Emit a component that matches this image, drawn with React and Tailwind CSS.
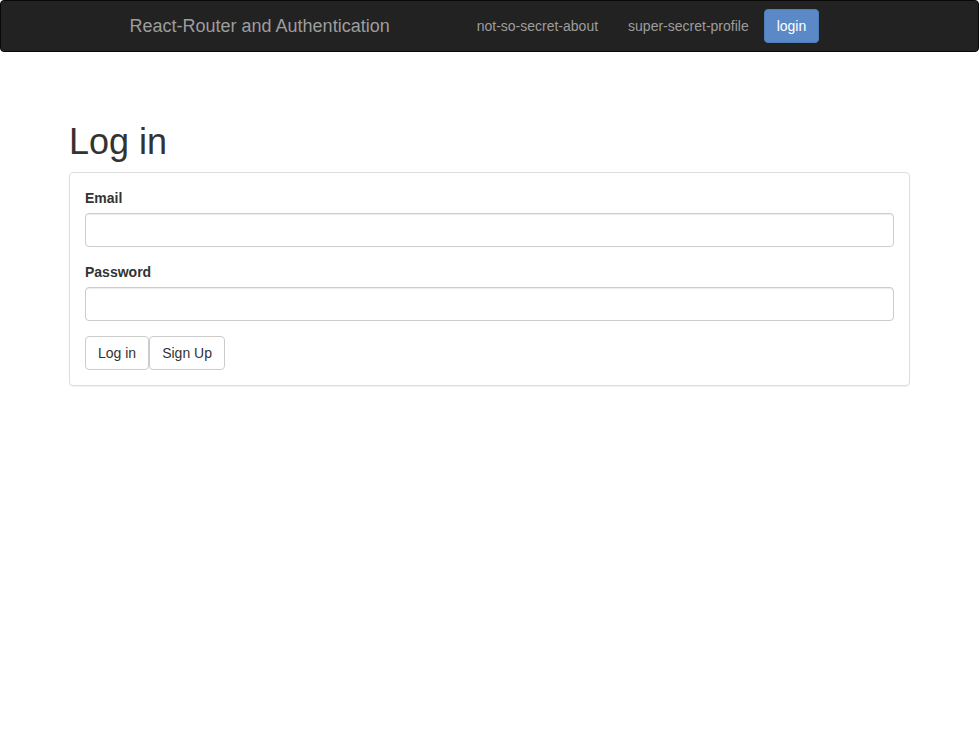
import React from "react";

export default function App() {
  return (
    <div className="min-h-screen bg-white text-[14px] leading-[20px] text-[#333]" style={{ fontFamily: '"Liberation Sans", Arial, sans-serif' }}>
      {/* Navbar */}
      <nav className="h-[52px] bg-[#222] border border-[#080808] rounded-[4px]">
        <div className="w-[750px] mx-auto flex items-center h-[50px]">
          <a className="px-[15px] text-[18px] leading-[20px] text-[#9d9d9d] py-[15px]" href="#">
            React-Router and Authentication
          </a>
          <ul className="flex items-center ml-[57px]">
            <li>
              <a className="block px-[15px] py-[15px] text-[#9d9d9d]" href="#">not-so-secret-about</a>
            </li>
            <li>
              <a className="block px-[15px] py-[15px] text-[#9d9d9d]" href="#">super-secret-profile</a>
            </li>
            <li>
              <button className="h-[34px] px-[12px] rounded-[4px] bg-[#5b89c7] border border-[#4f7db9] text-white">
                login
              </button>
            </li>
          </ul>
        </div>
      </nav>

      {/* Content */}
      <main className="px-[69px] pt-[70px]">
        <h1 className="text-[36px] leading-[40px] font-normal mb-[10px]">Log in</h1>
        <div className="border border-[#ddd] rounded-[4px] p-[15px] shadow-[0_1px_1px_rgba(0,0,0,0.05)]">
          <div className="mb-[15px]">
            <label className="block font-bold mb-[5px]">Email</label>
            <input
              type="email"
              className="block w-full h-[34px] px-[12px] border border-[#ccc] rounded-[4px] shadow-[inset_0_1px_1px_rgba(0,0,0,0.075)] outline-none"
            />
          </div>
          <div className="mb-[15px]">
            <label className="block font-bold mb-[5px]">Password</label>
            <input
              type="password"
              className="block w-full h-[34px] px-[12px] border border-[#ccc] rounded-[4px] shadow-[inset_0_1px_1px_rgba(0,0,0,0.075)] outline-none"
            />
          </div>
          <div className="flex">
            <button className="h-[34px] px-[12px] border border-[#ccc] rounded-[4px] bg-white text-[#333]">Log in</button>
            <button className="h-[34px] px-[12px] border border-[#ccc] rounded-[4px] bg-white text-[#333]">Sign Up</button>
          </div>
        </div>
      </main>
    </div>
  );
}
